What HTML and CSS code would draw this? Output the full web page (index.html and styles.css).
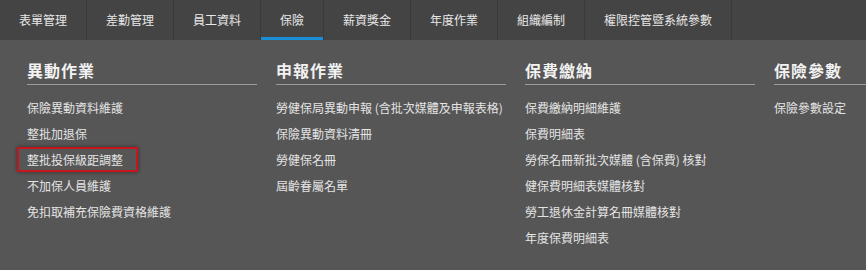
FILE: index.html
```html
<!DOCTYPE html>
<html lang="zh-Hant">

<head>
    <meta charset="UTF-8">
    <meta name="viewport" content="width=device-width, initial-scale=1.0">
    <title>保險</title>
    <link rel="stylesheet" href="styles.css">
</head>

<body>
    <nav class="menu-bar">
        <a class="tab">表單管理</a>
        <a class="tab">差勤管理</a>
        <a class="tab">員工資料</a>
        <a class="tab active">保險</a>
        <a class="tab">薪資獎金</a>
        <a class="tab">年度作業</a>
        <a class="tab">組織編制</a>
        <a class="tab">權限控管暨系統參數</a>
    </nav>

    <div class="mega-menu">
        <div class="column">
            <h3 class="column-title">異動作業</h3>
            <ul class="links">
                <li><a>保險異動資料維護</a></li>
                <li><a>整批加退保</a></li>
                <li><a class="marked">整批投保級距調整</a></li>
                <li><a>不加保人員維護</a></li>
                <li><a>免扣取補充保險費資格維護</a></li>
            </ul>
        </div>
        <div class="column">
            <h3 class="column-title">申報作業</h3>
            <ul class="links">
                <li><a>勞健保局異動申報 (含批次媒體及申報表格)</a></li>
                <li><a>保險異動資料清冊</a></li>
                <li><a>勞健保名冊</a></li>
                <li><a>屆齡眷屬名單</a></li>
            </ul>
        </div>
        <div class="column">
            <h3 class="column-title">保費繳納</h3>
            <ul class="links">
                <li><a>保費繳納明細維護</a></li>
                <li><a>保費明細表</a></li>
                <li><a>勞保名冊新批次媒體 (含保費) 核對</a></li>
                <li><a>健保費明細表媒體核對</a></li>
                <li><a>勞工退休金計算名冊媒體核對</a></li>
                <li><a>年度保費明細表</a></li>
            </ul>
        </div>
        <div class="column">
            <h3 class="column-title">保險參數</h3>
            <ul class="links">
                <li><a>保險參數設定</a></li>
            </ul>
        </div>
    </div>
</body>

</html>
```

FILE: styles.css
```css
/* General */
body {
    margin: 0;
    height: 270px;
    background: #565656;
    font-family: "Noto Sans CJK TC", "Noto Sans", sans-serif;
    color: #e4e4e4;
    overflow: hidden;
}

/* Top menu bar */
.menu-bar {
    display: flex;
    height: 40px;
    background: #444444;
}

.tab {
    padding: 0 19px;
    line-height: 40px;
    font-size: 12px;
    color: #e8e8e8;
    border-right: 1px solid #3a3a3a;
    white-space: nowrap;
    cursor: pointer;
}

.tab.active {
    box-shadow: inset 0 -3px 0 #1a8fd8;
}

/* Dropdown panel */
.mega-menu {
    display: grid;
    grid-template-columns: repeat(4, 230px);
    column-gap: 19px;
    padding: 20px 0 0 27px;
    overflow: hidden;
}

.column-title {
    margin: 0;
    padding-bottom: 4px;
    font-size: 16px;
    line-height: 20px;
    font-weight: bold;
    letter-spacing: 1px;
    color: #f2f2f2;
    border-bottom: 1px solid #9a9a9a;
}

.links {
    list-style: none;
    margin: 10px 0 0;
    padding: 0;
}

.links li {
    height: 26px;
    line-height: 26px;
    font-size: 12px;
    white-space: nowrap;
}

.links a {
    cursor: pointer;
}

/* Highlight box */
.links a.marked {
    display: inline-block;
    line-height: 21px;
    margin-left: -10px;
    padding: 0 13px 0 8px;
    border: 2px solid #c4161c;
    box-shadow: 0 0 4px rgba(0, 0, 0, 0.45);
}
```
